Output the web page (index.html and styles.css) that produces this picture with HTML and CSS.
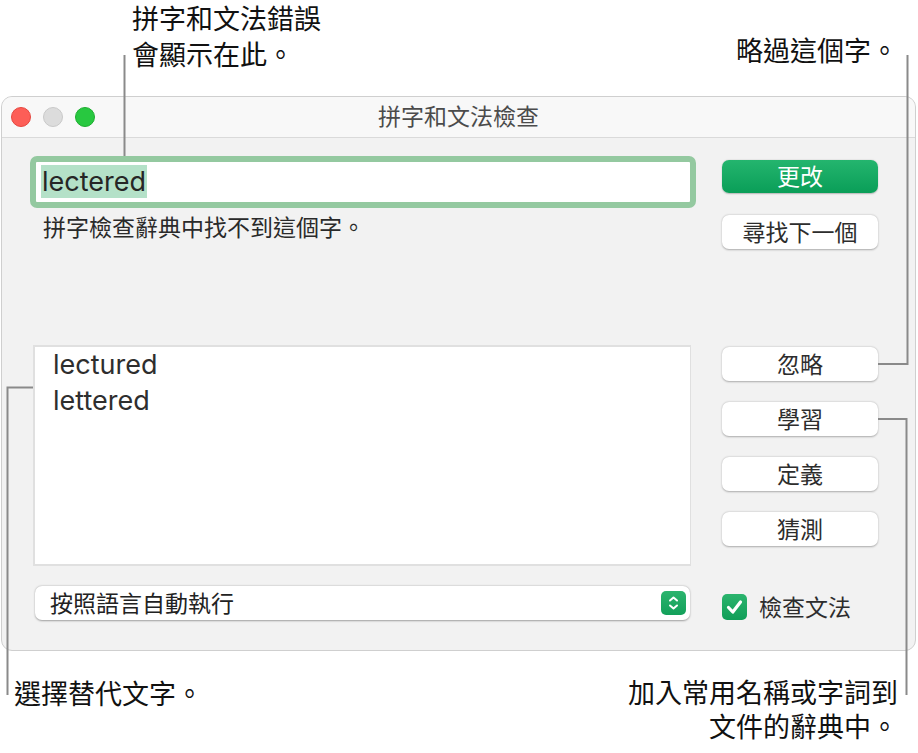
FILE: index.html
```html
<!DOCTYPE html>
<html lang="zh-Hant">
<head>
<meta charset="utf-8">
<title>拼字和文法檢查</title>
<link rel="stylesheet" href="styles.css">
</head>
<body>
<div class="page">
  <header class="top-notes">
    <p class="note note-left">拼字和文法錯誤<br>會顯示在此。</p>
    <p class="note note-right">略過這個字。</p>
  </header>

  <div class="window">
    <div class="titlebar">
      <div class="lights">
        <span class="light red"></span>
        <span class="light gray"></span>
        <span class="light green"></span>
      </div>
      <div class="title">拼字和文法檢查</div>
      <div></div>
    </div>
    <div class="content">
      <div class="main-col">
        <div class="field"><span class="sel">lectered</span></div>
        <p class="msg">拼字檢查辭典中找不到這個字。</p>
        <ul class="guesses">
          <li>lectured</li>
          <li>lettered</li>
        </ul>
        <div class="popup">
          <span class="popup-label">按照語言自動執行</span>
          <span class="stepper">
            <svg width="25" height="24" viewBox="0 0 25 24"><path d="M9 9.5 L12.5 6.5 L16 9.5 M9 14.5 L12.5 17.5 L16 14.5" fill="none" stroke="#fff" stroke-width="2" stroke-linecap="round" stroke-linejoin="round"/></svg>
          </span>
        </div>
      </div>
      <div class="side-col">
        <button class="btn primary">更改</button>
        <button class="btn b-next">尋找下一個</button>
        <button class="btn b-ignore">忽略</button>
        <button class="btn">學習</button>
        <button class="btn">定義</button>
        <button class="btn">猜測</button>
        <label class="check">
          <span class="box">
            <svg width="25" height="26" viewBox="0 0 25 26"><path d="M6.5 13.5 L10.8 18 L18.5 8" fill="none" stroke="#fff" stroke-width="3.2" stroke-linecap="round" stroke-linejoin="round"/></svg>
          </span>
          <span class="check-label">檢查文法</span>
        </label>
      </div>
    </div>
  </div>

  <footer class="bottom-notes">
    <p class="note note-bl">選擇替代文字。</p>
    <p class="note note-br"><span class="line">加入常用名稱或字詞到</span><span class="line">文件的辭典中。</span></p>
  </footer>

  <svg class="leaders" width="918" height="753" viewBox="0 0 918 753">
    <g fill="none" stroke="#8a8a8a" stroke-width="2">
      <path d="M124.5 55 V156"/>
      <path d="M907.5 55 V364 H878"/>
      <path d="M878 419 H906.5 V695"/>
      <path d="M33 387.5 H7.5 V695"/>
    </g>
  </svg>
</div>
</body>
</html>
```

FILE: styles.css
```css
* { box-sizing: border-box; }

html, body {
  margin: 0;
  padding: 0;
  background: #ffffff;
}

body {
  font-family: Inter, "Noto Sans CJK TC", "Liberation Sans", sans-serif;
  color: #111;
}

.page {
  position: relative;
  width: 918px;
  height: 753px;
  overflow: hidden;
}

.note {
  margin: 0;
  font-family: "Noto Sans CJK TC", sans-serif;
  font-size: 27px;
  line-height: 36px;
  color: #111;
}

.top-notes {
  display: flex;
  height: 96px;
}

.note-left {
  margin-left: 132px;
  margin-top: 0;
  line-height: 36px;
}

.note-right {
  margin-left: auto;
  margin-right: 20px;
  margin-top: 32px;
}

.window {
  margin-left: 1px;
  width: 915px;
  height: 555px;
  border: 1px solid #cfcfcf;
  border-radius: 11px;
  overflow: hidden;
  display: flex;
  flex-direction: column;
  background: #f2f2f2;
}

.titlebar {
  height: 41px;
  flex: none;
  display: grid;
  grid-template-columns: 1fr auto 1fr;
  align-items: center;
  background: #f8f8f8;
  border-bottom: 1px solid #dadada;
}

.lights {
  display: flex;
  gap: 12px;
  padding-left: 9px;
  padding-bottom: 1px;
}

.light {
  width: 20px;
  height: 20px;
  border-radius: 50%;
}
.light.red { background: #fd5e57; border: 1px solid #e5473f; }
.light.gray { background: #dcdcdc; border: 1px solid #c8c8c8; }
.light.green { background: #28c840; border: 1px solid #1dad2f; }

.title {
  font-family: "Noto Sans CJK TC", sans-serif;
  font-size: 23px;
  line-height: 30px;
  color: #4b4b4b;
  margin-top: -4px;
}

.content {
  flex: 1;
  display: flex;
  gap: 26px;
  padding: 18px 0 0 28px;
}

.main-col {
  width: 666px;
  display: flex;
  flex-direction: column;
}

.field {
  height: 52px;
  border: 6px solid #94c9a0;
  border-radius: 7px;
  background: #fff;
  padding-left: 5px;
  display: flex;
  align-items: center;
}

.sel {
  background: #b4e1c8;
  font-size: 27px;
  line-height: 33px;
  color: #262626;
  padding: 0 1px;
  margin-top: -1px;
}

.msg {
  margin: 4px 0 0 13px;
  font-family: "Noto Sans CJK TC", sans-serif;
  font-size: 23px;
  line-height: 28px;
  color: #2a2a2a;
}

.guesses {
  list-style: none;
  margin: 105px 0 0 3px;
  padding: 0 0 0 18px;
  width: 658px;
  height: 221px;
  background: #fff;
  border: 2px solid #e0e0e0;
  border-right-width: 1px;
  border-bottom-width: 2px;
}

.guesses li {
  font-size: 27px;
  line-height: 36px;
  color: #2e2e2e;
}

.popup {
  margin: 20px 0 0 5px;
  width: 655px;
  height: 34px;
  background: #fff;
  border-radius: 7px;
  box-shadow: 0 0.5px 2px rgba(0,0,0,0.35);
  display: flex;
  align-items: center;
  justify-content: space-between;
  padding: 0 4px 0 15px;
}

.popup-label {
  font-family: "Noto Sans CJK TC", sans-serif;
  font-size: 23px;
  line-height: 30px;
  color: #222;
  margin-top: -2px;
}

.stepper {
  width: 25px;
  height: 24px;
  border-radius: 5px;
  background: linear-gradient(#2bb46d, #13a05a);
  display: block;
}
.stepper svg { display: block; }

.side-col {
  width: 156px;
  display: flex;
  flex-direction: column;
  gap: 21px;
  padding-top: 4px;
}

.btn {
  height: 34px;
  width: 156px;
  margin: 0;
  border: none;
  border-radius: 7px;
  background: #fff;
  box-shadow: 0 0.5px 2px rgba(0,0,0,0.3);
  font-family: "Noto Sans CJK TC", sans-serif;
  font-size: 23px;
  line-height: 30px;
  color: #2d2d2d;
  padding: 0 0 3px;
}

.btn.primary {
  height: 33px;
  color: #fff;
  background: linear-gradient(#24b56e, #0a9e58);
  box-shadow: 0 0.5px 1.5px rgba(0,0,0,0.25);
}

.btn.b-next { margin-top: 1px; }
.btn.b-ignore { margin-top: 77px; }

.check {
  margin-top: 26px;
  display: flex;
  align-items: center;
  gap: 12px;
}

.box {
  width: 25px;
  height: 26px;
  border-radius: 5px;
  background: linear-gradient(#2bb46d, #109e58);
  display: block;
}
.box svg { display: block; }

.check-label {
  font-family: "Noto Sans CJK TC", sans-serif;
  font-size: 23px;
  line-height: 30px;
  color: #2d2d2d;
  margin-top: -2px;
}

.bottom-notes {
  display: flex;
  justify-content: space-between;
  align-items: flex-start;
  margin-top: 24px;
  padding: 0 20px 0 14px;
}

.note-br {
  text-align: right;
  display: flex;
  flex-direction: column;
  align-items: flex-end;
}

.note-br .line {
  display: block;
  height: 34px;
  line-height: 34px;
}

.leaders {
  position: absolute;
  left: 0;
  top: 0;
  pointer-events: none;
}
```
